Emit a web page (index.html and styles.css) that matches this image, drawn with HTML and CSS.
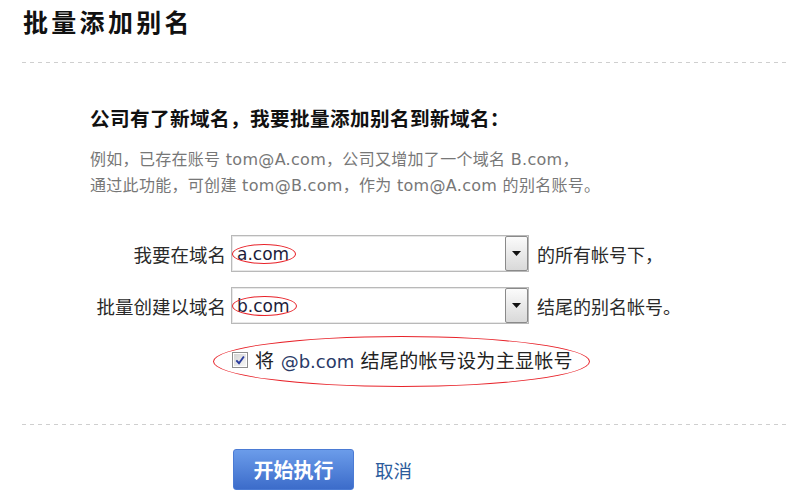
FILE: index.html
```html
<!DOCTYPE html>
<html lang="zh-CN">
<head>
<meta charset="utf-8">
<title>批量添加别名</title>
<link rel="stylesheet" href="styles.css">
</head>
<body>
<div class="page">
  <h1 class="title">批量添加别名</h1>
  <div class="divider"></div>
  <div class="content">
    <h2 class="heading">公司有了新域名，我要批量添加别名到新域名：</h2>
    <p class="desc">例如，已存在账号 tom@A.com，公司又增加了一个域名 B.com，<br>通过此功能，可创建 tom@B.com，作为 tom@A.com 的别名账号。</p>
    <div class="form">
      <span class="label">我要在域名</span>
      <div class="select">
        <span class="value">a.com<span class="ring"></span></span>
        <span class="drop"><svg width="9" height="5" viewBox="0 0 9 5"><polygon points="0,0 9,0 4.5,5" fill="#111"/></svg></span>
      </div>
      <span class="suffix">的所有帐号下，</span>

      <span class="label">批量创建以域名</span>
      <div class="select">
        <span class="value">b.com<span class="ring"></span></span>
        <span class="drop"><svg width="9" height="5" viewBox="0 0 9 5"><polygon points="0,0 9,0 4.5,5" fill="#111"/></svg></span>
      </div>
      <span class="suffix">结尾的别名帐号。</span>

      <div class="check-row">
        <span class="big-ring"></span>
        <svg class="checkbox" width="16" height="16" viewBox="0 0 16 16">
          <defs>
            <linearGradient id="cbg" x1="0" y1="0" x2="1" y2="1">
              <stop offset="0" stop-color="#d4d4d4"/>
              <stop offset="1" stop-color="#f7f7f7"/>
            </linearGradient>
          </defs>
          <rect x="0.5" y="0.5" width="15" height="15" fill="#fff" stroke="#8e8e8e"/>
          <rect x="2" y="2" width="12" height="12" fill="url(#cbg)"/>
          <path d="M4.3 8.3 L7 11.2 L11.9 4.5" fill="none" stroke="#2b3d9e" stroke-width="1.9"/>
        </svg>
        <span class="check-text">将 <span class="latin">@b.com</span> 结尾的帐号设为主显帐号</span>
      </div>
    </div>
  </div>
  <div class="divider bottom"></div>
  <div class="actions">
    <button class="btn" type="button">开始执行</button>
    <a class="cancel" href="#">取消</a>
  </div>
</div>
</body>
</html>
```

FILE: styles.css
```css
* { box-sizing: border-box; }

body {
  margin: 0;
  background: #fff;
  font-family: "DejaVu Sans", "Noto Sans CJK SC", sans-serif;
  color: #333;
}

.page {
  padding: 4px 0 0 22px;
}

.title {
  margin: 0;
  padding-left: 1px;
  height: 34px;
  font-size: 25px;
  line-height: 34px;
  font-weight: 700;
  letter-spacing: 3.3px;
  color: #111;
  font-family: "Noto Sans CJK SC", sans-serif;
}

.divider {
  margin-top: 24px;
  height: 1px;
  background: repeating-linear-gradient(to right, #cfcfcf 0 4px, transparent 4px 8px);
}

.divider.bottom {
  margin-top: 48px;
}

.content {
  padding-left: 68px;
}

.heading {
  margin: 43px 0 0;
  height: 28px;
  font-size: 19.6px;
  line-height: 28px;
  font-weight: 700;
  letter-spacing: 0.4px;
  color: #111;
}

.desc {
  margin: 13px 0 0;
  height: 52px;
  font-size: 16px;
  line-height: 26px;
  letter-spacing: 0.3px;
  color: #777;
}

.form {
  margin-top: 36px;
  display: grid;
  grid-template-columns: 141px 298px auto;
  grid-auto-rows: 37px;
  row-gap: 15px;
  align-items: center;
}

.label {
  padding-right: 5px;
  text-align: right;
  font-size: 18.5px;
  color: #2a2a2a;
  white-space: nowrap;
}

.select {
  height: 37px;
  display: flex;
  align-items: center;
  justify-content: space-between;
  border: 1px solid #b9b9b9;
  box-shadow: inset 0 0 0 1px #e8e8e8;
  background: #fff;
}

.value {
  position: relative;
  display: inline-block;
  margin-left: 5px;
  font-size: 17px;
  line-height: 20px;
  color: #1c1c3a;
}

.ring {
  position: absolute;
  left: -5px;
  right: -7px;
  top: 0;
  bottom: 0;
  border: 1px solid #e8232a;
  border-radius: 50%;
}

.drop {
  align-self: stretch;
  width: 23px;
  display: flex;
  align-items: center;
  justify-content: center;
  border: 1px solid #8a8a8a;
  border-radius: 2px;
  background: linear-gradient(#fbfbfb, #d9d9d9);
}

.suffix {
  margin-left: 8px;
  font-size: 18px;
  color: #2a2a2a;
  white-space: nowrap;
}

.check-row {
  position: relative;
  grid-column: 2 / 4;
  height: 30px;
  margin-top: 4px;
  display: flex;
  align-items: center;
  padding-left: 1px;
}

.big-ring {
  position: absolute;
  left: -18px;
  top: -9px;
  width: 377px;
  height: 51px;
  border: 1px solid #e8232a;
  border-radius: 50%;
}

.checkbox {
  flex: none;
}

.check-text {
  margin-left: 7px;
  font-size: 19px;
  letter-spacing: 0.3px;
  color: #222;
  white-space: nowrap;
}

.check-text .latin {
  font-size: 18px;
  letter-spacing: 0;
  color: #2a3a66;
}

.actions {
  margin-top: 24px;
  padding-left: 211px;
  display: flex;
  align-items: center;
}

.btn {
  width: 121px;
  height: 41px;
  padding: 0;
  border: 1px solid #4b7bd4;
  border-radius: 3px;
  background: linear-gradient(#6b9cea, #3c6cca);
  color: #fff;
  font-family: "Noto Sans CJK SC", sans-serif;
  font-size: 20px;
  font-weight: 700;
  cursor: pointer;
}

.cancel {
  margin-left: 21px;
  font-size: 18.5px;
  color: #2c5c9c;
  text-decoration: none;
}
```
